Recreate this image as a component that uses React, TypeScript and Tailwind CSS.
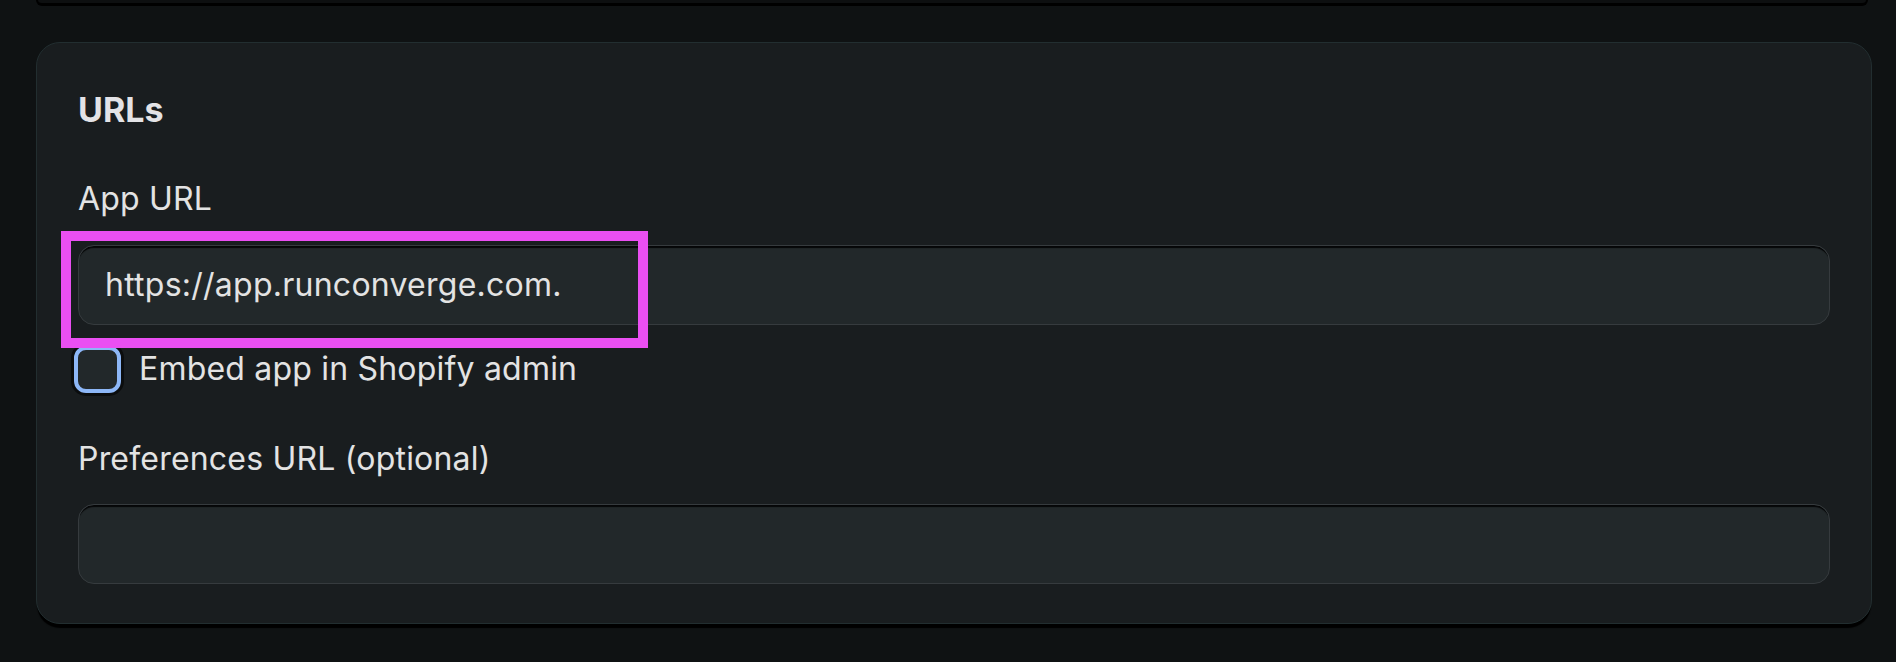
import React, { useState } from "react";

const font = { fontFamily: "Inter, 'Noto Sans', sans-serif" };

const TextField = ({ value }: { value?: string }) => (
  <div className="h-[80px] w-full rounded-[16px] border border-[#363b3e] bg-[#22282a] shadow-[inset_0_3px_1px_-1px_#050607] flex items-center pl-[26px]">
    <span className="text-[32px] leading-[40px] tracking-[0.25px] text-[#e3e3e3]">{value}</span>
  </div>
);

export default function App() {
  const [embed, setEmbed] = useState(false);

  return (
    <div className="min-h-[662px] w-[1896px] bg-[#0f1213] overflow-hidden" style={font}>
      {/* previous card, only its bottom edge is visible */}
      <div className="ml-[36px] w-[1832px] h-[6px] rounded-b-[24px] bg-[#0d0f10] border-x-2 border-b-[3px] border-black"></div>

      <div className="relative ml-[36px] mt-[36px] w-[1836px] rounded-[24px] border border-[#222e30] bg-[#191d1f] px-[41px] pt-[43px] pb-[39px] shadow-[0_5px_1px_-1px_#000]">
        <h2 className="text-[34px] leading-[48px] font-bold text-[#e3e3e6]">URLs</h2>

        <div className="mt-[45px] text-[32px] leading-[40px] tracking-[0.2px] text-[#e3e3e3]">App URL</div>
        <div className="mt-[26px]">
          <TextField value="https://app.runconverge.com." />
        </div>

        <label className="mt-[21px] flex items-start cursor-pointer">
          <span
            onClick={() => setEmbed(!embed)}
            className="-ml-[4px] h-[47px] w-[47px] shrink-0 rounded-[12px] border-[4px] border-[#8db7f7] bg-[#22282a] shadow-[0_0_0_3px_#0b0d0e]"
          ></span>
          <span className="ml-[18px] mt-[3px] text-[32px] leading-[40px] tracking-[0.2px] text-[#e3e3e3]">Embed app in Shopify admin</span>
        </label>

        <div className="mt-[46px] text-[32px] leading-[40px] tracking-[0.2px] text-[#e3e3e3]">Preferences URL (optional)</div>
        <div className="mt-[25px]">
          <TextField />
        </div>

        {/* annotation highlight */}
        <div className="absolute left-[24px] top-[188px] h-[117px] w-[587px] border-[10px] border-[#ea4ff2] pointer-events-none"></div>
      </div>
    </div>
  );
}
